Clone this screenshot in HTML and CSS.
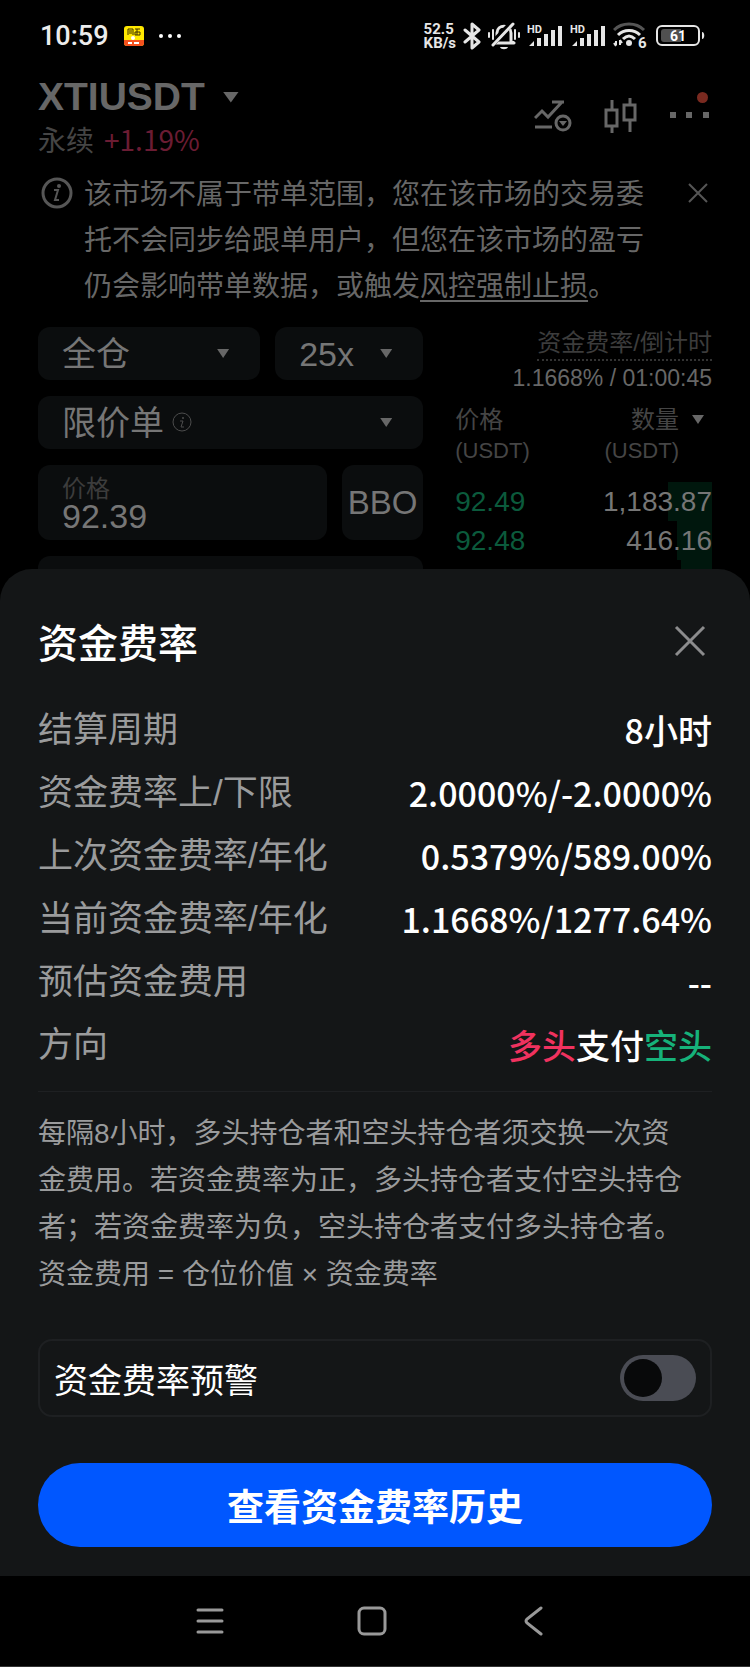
FILE: index.html
```
<!DOCTYPE html>
<html lang="zh-CN">

<head>
    <meta charset="utf-8">
    <meta name="viewport" content="width=device-width, initial-scale=1">
    <title>资金费率</title>
    <link rel="stylesheet" href="styles.css">
</head>

<body>
    <div class="status-bar">
        <span class="clock">10:59</span>
        <svg class="app-icon" width="20" height="20" viewBox="0 0 20 20">
            <rect width="20" height="20" rx="3" fill="#ffe800" />
            <path d="M0 14h20v3a3 3 0 0 1-3 3H3a3 3 0 0 1-3-3z" fill="#f4511e" />
            <path d="M4 9V3h5v6M5 5h3M5 7h3M11 3h5M11 6h5v3h-5zM13 3v6" fill="none" stroke="#3a3000" />
            <circle cx="9" cy="12" r="2" fill="#fff" />
            <path d="M4 17h4M10 17h5" stroke="#fff" stroke-width="2" />
        </svg>
        <svg width="22" height="6" viewBox="0 0 22 6" fill="#fff">
            <circle cx="2" cy="3" r="2" />
            <circle cx="11" cy="3" r="2" />
            <circle cx="20" cy="3" r="2" />
        </svg>
        <div class="status-right">
            <span class="net-speed">52.5<br>KB/s</span>
            <svg width="18" height="28" viewBox="0 0 18 28" fill="none" stroke="#e6e6e6" stroke-width="3" stroke-linejoin="round" stroke-linecap="round">
                <path d="M2 8l14 12-7 6V2l7 6L2 20" />
            </svg>
            <svg width="32" height="28" viewBox="0 0 32 28" fill="none" stroke="#e6e6e6" stroke-width="3" stroke-linecap="round">
                <path d="M7 21h18M9 19v-8c0-9 14-9 14 0v8l3 2M9 19l-3 2" />
                <path d="M24 1L4 22" stroke="#000" stroke-width="6" />
                <path d="M25 2L5 23" />
                <path d="M12 25c1 3 7 3 8 0z" fill="#e6e6e6" stroke="none" />
                <path d="M1 11v4M5 8v9M27 8v9M31 11v4" stroke-width="2" />
            </svg>
            <svg class="signal" width="36" height="24" viewBox="0 0 36 24" fill="#e6e6e6">
                <text x="0" y="9">HD</text>
                <path d="M2 22l5-5v5zM10 14h4v8h-4zM17 10h4v12h-4zM24 6h4v16h-4zM31 2h4v20h-4z" />
            </svg>
            <svg class="signal" width="36" height="24" viewBox="0 0 36 24" fill="#e6e6e6">
                <text x="0" y="9">HD</text>
                <path d="M2 22l5-5v5zM10 14h4v8h-4zM17 10h4v12h-4zM24 6h4v16h-4zM31 2h4v20h-4z" />
            </svg>
            <svg class="wifi" width="36" height="30" viewBox="0 0 36 30" fill="none" stroke="#e6e6e6" stroke-width="3">
                <path d="M1 9c8-8 22-8 30 0" stroke="#555" />
                <path d="M5 14c6-6 16-6 22 0M10 18c4-4 8-4 12 0" />
                <circle cx="16" cy="22" r="3" fill="#e6e6e6" stroke="none" />
                <path d="M3 20v4M1 22l2 3M7 24v-5M7 19l2 3" stroke-width="2" />
                <text x="25" y="27" stroke="none" fill="#e6e6e6">6</text>
            </svg>
            <svg class="battery" width="49" height="22" viewBox="0 0 49 22">
                <rect x="1" y="1" width="42" height="19" rx="5" fill="none" stroke="#e6e6e6" stroke-width="2" />
                <path d="M8 4h17v13H8a3 3 0 0 1-3-3V7a3 3 0 0 1 3-3z" fill="#505050" />
                <path d="M46 7c3 0 3 7 0 7z" fill="#e6e6e6" />
                <text x="22" y="16" text-anchor="middle" fill="#fff">61</text>
            </svg>
        </div>
    </div>

    <main class="market">
        <header class="market-header">
            <div class="pair">
                <h1 class="pair-name">XTIUSDT <span class="caret caret-large"></span></h1>
                <p class="pair-info">永续 <span class="change">+1.19%</span></p>
            </div>
            <div class="actions">
                <button class="icon-button" aria-label="指标">
                    <svg width="38" height="38" viewBox="0 0 38 38" fill="none" stroke="#676767" stroke-width="3">
                        <path d="M1 20l7-7 6 6L28 4M18 4h12M1 29h17" />
                        <circle cx="29" cy="25" r="7" />
                        <path d="M25 23h8l-4 5z" fill="#676767" stroke="none" />
                    </svg>
                </button>
                <button class="icon-button" aria-label="K线">
                    <svg width="34" height="38" viewBox="0 0 34 38" fill="none" stroke="#676767" stroke-width="3">
                        <path d="M2 12h11v16H2zM8 2v10M8 28v7M20 7h11v15H20zM26 0v7M26 22v12" />
                    </svg>
                </button>
                <button class="icon-button" aria-label="更多">
                    <svg width="42" height="38" viewBox="0 0 42 38" fill="#676767">
                        <path d="M0 14h6v6H0zM16 14h6v6h-6zM33 14h6v6h-6z" />
                    </svg>
                    <span class="badge"></span>
                </button>
            </div>
        </header>

        <div class="notice">
            <svg class="notice-icon" width="34" height="34" viewBox="0 0 34 34" fill="none" stroke="#565656" stroke-width="3">
                <circle cx="17" cy="17" r="14" />
                <path d="M14 14h4l-3 10h4" stroke-width="2" />
                <circle cx="19" cy="10" r="2" fill="#565656" stroke="none" />
            </svg>
            <p class="notice-text">该市场不属于带单范围，您在该市场的交易委托不会同步给跟单用户，但您在该市场的盈亏仍会影响带单数据，或触发<a class="notice-link" href="#">风控强制止损</a>。</p>
            <button class="icon-button" aria-label="关闭提示">
                <svg width="28" height="28" viewBox="0 0 28 28" stroke="#565656" stroke-width="2">
                    <path d="M5 5l18 18M23 5L5 23" />
                </svg>
            </button>
        </div>

        <div class="trade">
            <form class="order-form">
                <div class="form-row">
                    <div class="select-box margin-mode">
                        <select aria-label="保证金模式">
                            <option>全仓</option>
                        </select>
                        <span class="caret"></span>
                    </div>
                    <div class="select-box leverage">
                        <select aria-label="杠杆">
                            <option>25x</option>
                        </select>
                        <span class="caret"></span>
                    </div>
                </div>
                <div class="select-box">
                    <select aria-label="订单类型">
                        <option>限价单</option>
                    </select>
                    <svg class="order-info" width="20" height="20" viewBox="0 0 20 20" fill="none" stroke="#4c4c4c">
                        <circle cx="10" cy="10" r="9" />
                        <path d="M8 9h3l-2 6h3" />
                        <circle cx="11" cy="6" r="1" fill="#4c4c4c" stroke="none" />
                    </svg>
                    <span class="caret"></span>
                </div>
                <div class="form-row">
                    <div class="price-box">
                        <label for="price">价格</label>
                        <input id="price" type="text" value="92.39">
                    </div>
                    <button class="bbo" type="button">BBO</button>
                </div>
                <div class="select-box"></div>
            </form>

            <div class="order-book">
                <div class="funding">
                    <span class="funding-label">资金费率/倒计时</span>
                    <span class="funding-value">1.1668% / 01:00:45</span>
                </div>
                <table class="book">
                    <thead>
                        <tr>
                            <th>价格<br><span class="unit">(USDT)</span></th>
                            <th class="amount-head">数量<br><span class="unit">(USDT)</span><span class="caret"></span></th>
                        </tr>
                    </thead>
                    <tbody>
                        <tr>
                            <td>92.49</td>
                            <td style="--depth: 44px">1,183.87</td>
                        </tr>
                        <tr>
                            <td>92.48</td>
                            <td style="--depth: 35px">416.16</td>
                        </tr>
                        <tr>
                            <td></td>
                            <td style="--depth: 31px"></td>
                        </tr>
                    </tbody>
                </table>
            </div>
        </div>
    </main>

    <section class="sheet">
        <div class="sheet-header">
            <h2 class="sheet-title">资金费率</h2>
            <button class="icon-button" aria-label="关闭">
                <svg width="44" height="44" viewBox="0 0 44 44" stroke="#8c8c8d" stroke-width="3">
                    <path d="M8 8l28 28M36 8L8 36" />
                </svg>
            </button>
        </div>

        <dl class="details">
            <div class="detail">
                <dt>结算周期</dt>
                <dd>8小时</dd>
            </div>
            <div class="detail">
                <dt>资金费率上/下限</dt>
                <dd>2.0000%/-2.0000%</dd>
            </div>
            <div class="detail">
                <dt>上次资金费率/年化</dt>
                <dd>0.5379%/589.00%</dd>
            </div>
            <div class="detail">
                <dt>当前资金费率/年化</dt>
                <dd>1.1668%/1277.64%</dd>
            </div>
            <div class="detail">
                <dt>预估资金费用</dt>
                <dd>--</dd>
            </div>
            <div class="detail">
                <dt>方向</dt>
                <dd><span class="long">多头</span>支付<span class="short">空头</span></dd>
            </div>
        </dl>

        <p class="description">每隔8小时，多头持仓者和空头持仓者须交换一次资金费用。若资金费率为正，多头持仓者支付空头持仓者；若资金费率为负，空头持仓者支付多头持仓者。<br>资金费用 = 仓位价值 × 资金费率</p>

        <div class="alert-row">
            <label for="alert">资金费率预警</label>
            <input id="alert" class="toggle" type="checkbox">
        </div>

        <button class="history-button">查看资金费率历史</button>
    </section>

    <nav class="nav-bar">
        <button class="icon-button" aria-label="最近任务">
            <svg width="30" height="30" viewBox="0 0 30 30" stroke="#999" stroke-width="3" stroke-linecap="round">
                <path d="M3 4h24M3 15h24M3 26h24" />
            </svg>
        </button>
        <button class="icon-button" aria-label="主屏幕">
            <svg width="30" height="30" viewBox="0 0 30 30" fill="none" stroke="#999" stroke-width="3">
                <rect x="2" y="2" width="26" height="26" rx="5" />
            </svg>
        </button>
        <button class="icon-button" aria-label="返回">
            <svg width="30" height="30" viewBox="0 0 30 30" fill="none" stroke="#999" stroke-width="3" stroke-linecap="round">
                <path d="M22 2L8 13q-2 2 0 4l14 11" />
            </svg>
        </button>
    </nav>
</body>

</html>
```
FILE: styles.css
```
* {
    box-sizing: border-box;
}

body {
    margin: 0;
    min-height: 100vh;
    display: flex;
    flex-direction: column;
    background-color: #000;
    color: #fff;
    font-family: "Liberation Sans", "Noto Sans CJK SC", sans-serif;
}

h1,
h2,
p,
dl,
dd {
    margin: 0;
}

svg {
    display: block;
}

button,
input,
select {
    margin: 0;
    padding: 0;
    border: none;
    background: none;
    color: inherit;
    font-family: inherit;
}

.icon-button {
    position: relative;
    flex: none;
}

.caret {
    width: 12px;
    height: 9px;
    background-color: #676767;
    clip-path: polygon(0 0, 100% 0, 50% 100%);
}

.caret-large {
    width: 16px;
    height: 11px;
}

/* Status bar */
.status-bar {
    display: flex;
    align-items: center;
    height: 72px;
    padding: 0 45px 0 40px;
    font-family: Roboto, sans-serif;
}

.clock {
    font-size: 27px;
    font-weight: 500;
    color: #ececec;
}

.app-icon {
    margin: 0 15px;
}

.status-right {
    display: flex;
    align-items: center;
    gap: 7px;
    margin-left: auto;
}

.net-speed {
    font-size: 15px;
    font-weight: 700;
    line-height: 14px;
    color: #e6e6e6;
}

.signal text {
    font-size: 11px;
    font-weight: 700;
}

.wifi text {
    font-size: 15px;
    font-weight: 700;
}

.battery text {
    font-size: 14px;
    font-weight: 700;
}

/* Market page behind the sheet */
.market {
    padding: 3px 38px 0;
}

.market-header {
    display: flex;
    justify-content: space-between;
    align-items: center;
}

.pair-name {
    display: flex;
    align-items: center;
    gap: 18px;
    font-size: 39px;
    line-height: 44px;
    color: #676767;
}

.pair-info {
    display: flex;
    gap: 10px;
    font-size: 28px;
    line-height: 40px;
    font-family: "Noto Sans CJK SC", sans-serif;
    color: #454545;
}

.change {
    color: #6b1c33;
}

.actions {
    display: flex;
    gap: 32px;
}

.badge {
    position: absolute;
    top: -6px;
    right: 4px;
    width: 11px;
    height: 11px;
    border-radius: 50%;
    background-color: #7a2a20;
}

.notice {
    display: flex;
    align-items: flex-start;
    margin-top: 13px;
}

.notice-icon {
    margin: 4px 10px 0 2px;
}

.notice-text {
    flex: 1;
    margin-right: 22px;
    font-size: 28px;
    line-height: 46px;
    color: #676767;
}

.notice .icon-button {
    margin-top: 7px;
}

.notice-link {
    color: inherit;
    text-underline-offset: 4px;
}

.trade {
    display: flex;
    gap: 32px;
    margin-top: 17px;
}

.order-form {
    flex: 3;
    display: flex;
    flex-direction: column;
    gap: 16px;
}

.form-row {
    display: flex;
    gap: 15px;
}

.select-box {
    position: relative;
    height: 53px;
    border-radius: 12px;
    background-color: #0b0d0e;
}

.select-box select {
    width: 100%;
    height: 100%;
    padding-left: 24px;
    appearance: none;
    font-size: 34px;
    color: #767676;
}

.select-box .caret {
    position: absolute;
    top: 22px;
    right: 31px;
    pointer-events: none;
}

.margin-mode {
    flex: 3;
}

.leverage {
    flex: 2;
}

.order-info {
    position: absolute;
    top: 16px;
    left: 134px;
}

.price-box {
    flex: 1;
    min-width: 0;
    display: flex;
    flex-direction: column;
    height: 75px;
    padding: 12px 24px 0;
    border-radius: 12px;
    background-color: #0b0d0e;
}

.price-box label {
    font-size: 24px;
    line-height: 24px;
    color: #3c3c3c;
}

.price-box input {
    width: 100%;
    height: 30px;
    font-size: 34px;
    color: #767676;
}

.bbo {
    width: 81px;
    border-radius: 12px;
    background-color: #0b0d0e;
    font-size: 33px;
    color: #767676;
}

.order-book {
    flex: 2;
}

.funding {
    display: flex;
    flex-direction: column;
    align-items: flex-end;
}

.funding-label {
    border-bottom: 2px dotted #333;
    font-size: 24px;
    line-height: 32px;
    color: #3c3c3c;
}

.funding-value {
    font-size: 23px;
    line-height: 34px;
    color: #676767;
}

.book {
    width: 100%;
    margin-top: 10px;
    border-collapse: collapse;
}

.book th {
    padding: 0 0 16px;
    font-size: 24px;
    font-weight: 400;
    line-height: 30px;
    text-align: left;
    color: #454545;
}

.book .unit {
    font-size: 22px;
}

.book .amount-head {
    position: relative;
    padding-right: 33px;
    text-align: right;
}

.amount-head .caret {
    position: absolute;
    top: 10px;
    right: 8px;
}

.book td {
    height: 39px;
    padding: 0;
    font-size: 28px;
    line-height: 39px;
    color: #0b5a3c;
}

.book td + td {
    text-align: right;
    color: #767676;
    background: linear-gradient(#00170d, #00170d) right / var(--depth) 100% no-repeat;
}

/* Funding rate sheet */
.sheet {
    position: relative;
    flex: 1;
    margin-top: -40px;
    padding: 47px 38px 28px;
    border-radius: 32px 32px 0 0;
    background-color: #141617;
}

.sheet-header {
    display: flex;
    justify-content: space-between;
    align-items: center;
}

.sheet-title {
    font-family: "Noto Sans CJK SC", sans-serif;
    font-size: 40px;
    font-weight: 500;
    line-height: 50px;
}

.details {
    display: flex;
    flex-direction: column;
    gap: 17px;
    margin-top: 41px;
    padding-bottom: 23px;
    border-bottom: 1px solid #1e2022;
}

.detail {
    display: flex;
    justify-content: space-between;
    line-height: 46px;
}

.detail dt {
    font-size: 35px;
    color: #9a9b9c;
}

.detail dd {
    font-family: "Noto Sans CJK SC", sans-serif;
    font-size: 34px;
    font-weight: 500;
}

.long {
    color: #f0325f;
}

.short {
    color: #16b27a;
}

.description {
    margin-top: 18px;
    padding-right: 20px;
    font-size: 28px;
    line-height: 47px;
    color: #9a9b9c;
}

.alert-row {
    display: flex;
    justify-content: space-between;
    align-items: center;
    height: 78px;
    margin-top: 41px;
    padding: 0 14px;
    border: 2px solid #1e2022;
    border-radius: 14px;
    font-size: 34px;
}

.toggle {
    width: 76px;
    height: 46px;
    padding: 4px;
    appearance: none;
    border-radius: 23px;
    background-color: #4a4c54;
}

.toggle::before {
    content: "";
    display: block;
    width: 38px;
    height: 38px;
    border-radius: 50%;
    background-color: #08090a;
}

.toggle:checked::before {
    margin-left: auto;
}

.history-button {
    width: 100%;
    height: 84px;
    margin-top: 46px;
    border-radius: 42px;
    background-color: #0057ff;
    font-family: "Noto Sans CJK SC", sans-serif;
    font-size: 37px;
    font-weight: 700;
}

/* System navigation */
.nav-bar {
    display: flex;
    justify-content: center;
    align-items: center;
    gap: 132px;
    height: 91px;
    padding-right: 6px;
    border-bottom: 1px solid #333;
}
```
